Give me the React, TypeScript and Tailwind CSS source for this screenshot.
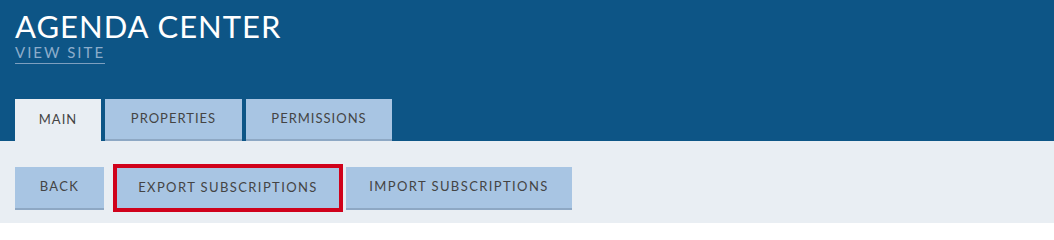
export default function App() {
  const font = { fontFamily: 'Lato, "Open Sans", sans-serif' };
  return (
    <div className="h-[223px] w-[1054px] bg-[#e9eef3]" style={font}>
      <header className="bg-[#0d5586] px-[15px] pt-[12px]">
        <h1 className="text-[31px] leading-[28px] font-normal tracking-[1px] text-white">
          AGENDA CENTER
        </h1>
        <a className="mt-[1px] inline-block border-b border-[#7d9fbf] pb-[2px] text-[15px] leading-[18px] tracking-[2px] text-[#8cadcb]">
          VIEW SITE
        </a>
        <nav className="mt-[35px] flex gap-[4px]">
          <div className="flex h-[42px] w-[86px] items-center justify-center bg-[#e9eef3] text-[13px] tracking-[1px] text-[#444]">
            MAIN
          </div>
          <div className="flex h-[42px] w-[137px] items-center justify-center border-b-2 border-[#8ea8c4] bg-[#a8c5e3] text-[13px] tracking-[1px] text-[#444]">
            PROPERTIES
          </div>
          <div className="flex h-[42px] w-[146px] items-center justify-center border-b-2 border-[#8ea8c4] bg-[#a8c5e3] text-[13px] tracking-[1px] text-[#444]">
            PERMISSIONS
          </div>
        </nav>
      </header>
      <div className="flex items-center px-[15px] pt-[23px]">
        <button className="h-[43px] w-[89px] border-b-2 border-[#8ea8c4] bg-[#a8c5e3] text-[13px] tracking-[1.4px] text-[#444]">
          BACK
        </button>
        <button className="ml-[9px] h-[48px] w-[230px] border-4 border-[#d0021b] bg-[#a8c5e3] text-[13px] tracking-[1.4px] text-[#444]">
          EXPORT SUBSCRIPTIONS
        </button>
        <button className="ml-[3px] h-[43px] w-[226px] border-b-2 border-[#8ea8c4] bg-[#a8c5e3] text-[13px] tracking-[1.4px] text-[#444]">
          IMPORT SUBSCRIPTIONS
        </button>
      </div>
    </div>
  );
}
